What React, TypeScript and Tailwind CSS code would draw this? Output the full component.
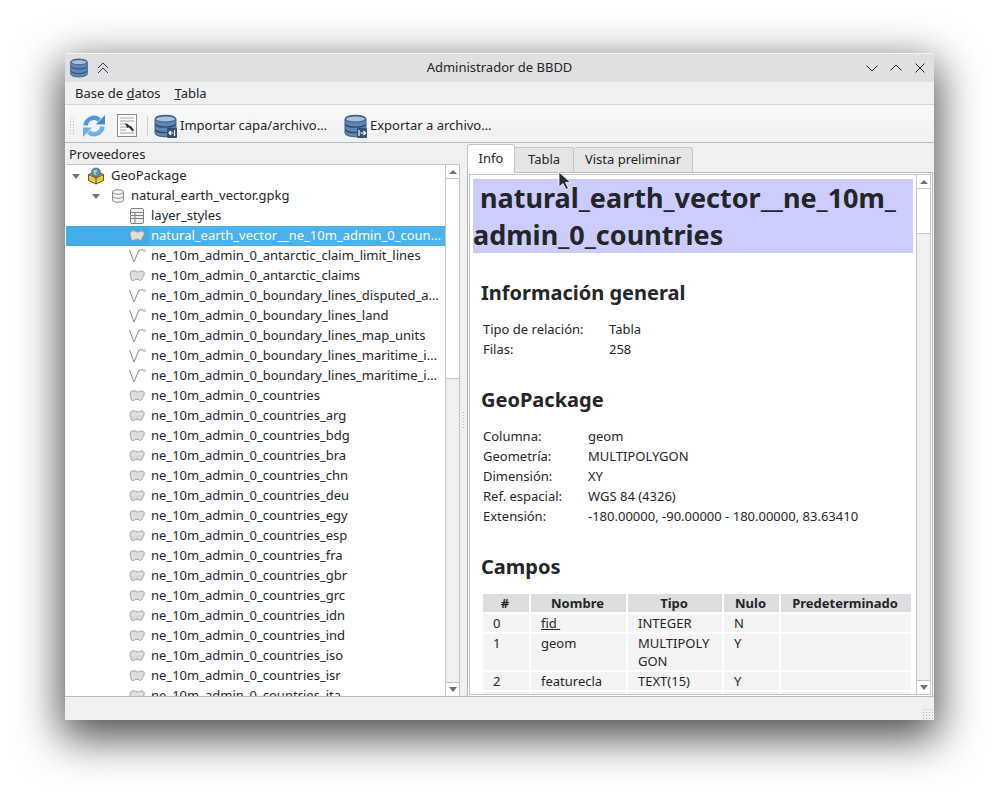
import React from "react";

const font = { fontFamily: '"Noto Sans", sans-serif' };

function DbIcon({ badge }: { badge?: "in" | "out" }) {
  return (
    <svg width="24" height="24" viewBox="0 0 24 24" className="shrink-0">
      <path d="M1 5c0-5 21-5 21 0v14c0 5-21 5-21 0z" fill="#5c86b4" stroke="#3a5a80" />
      <ellipse cx="11.500" cy="5" rx="10" ry="3" fill="#a9c1dc" stroke="#3a5a80" />
      <path d="M1.500 10.500c3 3.500 17 3.500 20 0M1.500 16c3 3.500 17 3.500 20 0" fill="none" stroke="#2f4a6b" strokeWidth="1.200" />
      {badge && <rect x="13" y="14" width="10" height="10" rx="1" fill="#33506f" />}
      {badge === "in" && <path d="M20.500 16v6M15 19h4m-2-2-2 2 2 2" stroke="#fff" fill="none" strokeWidth="1.200" />}
      {badge === "out" && <path d="M15 16v6M16.500 19h5m-2-2 2 2-2 2" stroke="#fff" fill="none" strokeWidth="1.200" />}
    </svg>
  );
}

function RefreshIcon() {
  return (
    <svg width="24" height="24" viewBox="0 0 24 24">
      <path d="M3.500 11.500a8.500 8.500 0 0 1 14-5.500" fill="none" stroke="#4b9ade" strokeWidth="4.500" />
      <path d="M14 10.500h9V1z" fill="#3f8fd6" />
      <path d="M20.500 12.500a8.500 8.500 0 0 1-14 5.500" fill="none" stroke="#6db0e6" strokeWidth="4.500" />
      <path d="M10 13.500H1V23z" fill="#6db0e6" />
    </svg>
  );
}

function ScriptIcon() {
  return (
    <svg width="20" height="23" viewBox="0 0 20 23">
      <rect x=".5" y=".5" width="19" height="22" fill="#fbfbfb" stroke="#8a8a8a" />
      <path d="M3 4h14M3 7h14M3 10h6M3 13h6M3 16h6M3 19h14" stroke="#a5a5a5" />
      <path d="M8 9.500l3 .5 1 1.500 2 .5 3 4-1.500 1.500-3.500-4-2 .5z" fill="#333" />
    </svg>
  );
}

function PolygonIcon() {
  return (
    <svg width="16" height="14" viewBox="0 0 16 14" className="shrink-0">
      <path
        d="M2 2.500c2-1.500 4-.5 6 .5 2 .5 3-1.500 5-1 2 .5 2.500 2 2 4-.5 1.500-1.500 2-2 3.500-.5 1.500-1 2.500-2.500 1.500-1.500-1-3.500-1-5 0-1.500 1-3.500.5-3.500-1.500 0-2-1-2.500-1-4 0-1 .5-2 1-2.500z"
        fill="#dededb"
        stroke="#9b9b98"
      />
    </svg>
  );
}

function LineIcon() {
  return (
    <svg width="17" height="14" viewBox="0 0 17 14" className="shrink-0 -mr-px">
      <path d="M.5 1l4.500 12 5-12c1 0 2 0 4-.5" fill="none" stroke="#888" />
      <circle cx="15.500" cy="1.500" r="1" fill="#fff" stroke="#888" strokeWidth=".6" />
    </svg>
  );
}

function TableIcon() {
  return (
    <svg width="14" height="16" viewBox="0 0 14 16" className="shrink-0">
      <rect x=".5" y=".5" width="13" height="15" rx="1.500" fill="#f0f0f0" stroke="#808080" />
      <path d="M1 4.500h12M1 7.500h12M1 10.500h12M5 4v11" stroke="#808080" />
    </svg>
  );
}

function Arrow() {
  return <span className="w-0 h-0 shrink-0 border-x-[4px] border-x-transparent border-t-[5px] border-t-[#6f7173]" />;
}

const rows: [string, "line" | "poly"][] = [
  ["ne_10m_admin_0_antarctic_claim_limit_lines", "line"],
  ["ne_10m_admin_0_antarctic_claims", "poly"],
  ["ne_10m_admin_0_boundary_lines_disputed_a…", "line"],
  ["ne_10m_admin_0_boundary_lines_land", "line"],
  ["ne_10m_admin_0_boundary_lines_map_units", "line"],
  ["ne_10m_admin_0_boundary_lines_maritime_i…", "line"],
  ["ne_10m_admin_0_boundary_lines_maritime_i…", "line"],
  ...["", "_arg", "_bdg", "_bra", "_chn", "_deu", "_egy", "_esp", "_fra", "_gbr", "_grc", "_idn", "_ind", "_iso", "_isr", "_ita"].map(
    (s): [string, "poly"] => ["ne_10m_admin_0_countries" + s, "poly"]
  ),
];

function TreeRow({ children, indent, selected }: { children: React.ReactNode; indent: string; selected?: boolean }) {
  return (
    <div className={`h-5 shrink-0 flex items-center gap-[6px] whitespace-nowrap ${indent} ${selected ? "bg-[#43ace8] text-[#fcfcfc]" : ""}`}>
      {children}
    </div>
  );
}

function Scrollbar({ thumbHeight }: { thumbHeight: string }) {
  return (
    <div className="w-[14px] shrink-0 border-l border-[#c4c4c4] flex flex-col bg-[#f0f0f0]">
      <div className="h-[14px] shrink-0 bg-white border-b border-[#c4c4c4] flex items-center justify-center">
        <span className="w-0 h-0 border-x-[4px] border-x-transparent border-b-[4px] border-b-[#6f7173]" />
      </div>
      <div className={`${thumbHeight} bg-white border-b border-[#c4c4c4]`} />
      <div className="flex-1" />
      <div className="h-[14px] shrink-0 bg-white border-t border-[#c4c4c4] flex items-center justify-center">
        <Arrow />
      </div>
    </div>
  );
}

function Section({ title, items, col }: { title: string; items: [string, string][]; col: string }) {
  return (
    <div>
      <h2 className="text-[20px] leading-[27px] font-bold text-[#232629] pl-2">{title}</h2>
      <div className="mt-[14px] pl-[10px]">
        {items.map(([k, v]) => (
          <div key={k} className="h-5 flex items-center">
            <span className={col}>{k}</span>
            <span>{v}</span>
          </div>
        ))}
      </div>
    </div>
  );
}

const cols = "grid grid-cols-[46px_95px_94px_55px_130px] gap-x-[2px]";

function FieldRow({ cells, tall }: { cells: React.ReactNode[]; tall?: boolean }) {
  return (
    <div className={`${cols} mt-[2px] ${tall ? "h-9" : "h-[18px]"}`}>
      {cells.map((c, i) => (
        <div key={i} className="bg-[#f4f4f4] pl-[10px] leading-[18px]">
          {c}
        </div>
      ))}
    </div>
  );
}

export default function App() {
  return (
    <div className="w-[999px] h-[797px] bg-white overflow-hidden pt-[53px] pl-[65px] text-[13px] text-[#232629]" style={font}>
      <div className="w-[869px] h-[667px] flex flex-col rounded-t-[3px] bg-[#eff0f1] shadow-[0_14px_44px_4px_rgba(0,0,0,0.7)] relative">
        {/* title bar */}
        <div className="h-[29px] shrink-0 bg-[#dee0e2] rounded-t-[3px] border-t border-[#f2f3f3] flex items-center pl-[4px] pr-[8px]">
          <svg width="20" height="20" viewBox="0 0 24 24" className="shrink-0">
            <path d="M2 5c0-5 20-5 20 0v14c0 5-20 5-20 0z" fill="#5c86b4" stroke="#3a5a80" />
            <ellipse cx="12" cy="5" rx="9.500" ry="3" fill="#a9c1dc" stroke="#3a5a80" />
            <path d="M2.500 10.500c3 3.500 16 3.500 19 0M2.500 16c3 3.500 16 3.500 19 0" fill="none" stroke="#2f4a6b" strokeWidth="1.200" />
          </svg>
          <svg width="12" height="12" viewBox="0 0 12 12" className="ml-[8px]">
            <path d="M1 6l5-5 5 5M1 11l5-5 5 5" fill="none" stroke="#3a3d40" />
          </svg>
          <div className="flex-1 text-center text-[13px] pl-[24px]">Administrador de BBDD</div>
          <div className="flex items-center gap-[12px]">
            <svg width="12" height="12" viewBox="0 0 12 12"><path d="M.5 3.500l5.500 5.500 5.500-5.500" fill="none" stroke="#232629" /></svg>
            <svg width="12" height="12" viewBox="0 0 12 12"><path d="M.5 8.500l5.500-5.500 5.500 5.500" fill="none" stroke="#232629" /></svg>
            <svg width="12" height="12" viewBox="0 0 12 12"><path d="M1.500 1.500l9 9M10.500 1.500l-9 9" fill="none" stroke="#232629" /></svg>
          </div>
        </div>
        {/* menu */}
        <div className="h-[23px] shrink-0 border-b border-[#d4d5d6] flex items-center pl-[10px] gap-[14px] pt-px">
          <span>Base de <span className="underline">d</span>atos</span>
          <span><span className="underline">T</span>abla</span>
        </div>
        {/* toolbar */}
        <div className="h-[38px] shrink-0 border-b border-[#b9babb] bg-gradient-to-b from-[#f9fafa] to-[#eff0f1] flex items-center pl-[4px] pt-[4px]">
          <div className="w-[6px] h-[18px] bg-[radial-gradient(#b5b6b7_1px,transparent_1px)] bg-[length:3px_3px]" />
          <div className="ml-[7px] h-6"><RefreshIcon /></div>
          <div className="ml-[11px] h-[23px]"><ScriptIcon /></div>
          <div className="ml-[10px] w-px h-5 bg-[#cfd0d1]" />
          <div className="ml-[6px] flex items-center gap-[2px]"><DbIcon badge="in" /><span>Importar capa/archivo…</span></div>
          <div className="ml-[17px] flex items-center gap-[2px]"><DbIcon badge="out" /><span>Exportar a archivo…</span></div>
        </div>
        {/* panes */}
        <div className="flex-1 min-h-0 flex border-b border-[#b9babb]">
          <div className="w-[395px] shrink-0 flex flex-col">
            <div className="h-[21px] shrink-0 pl-[4px] leading-[23px]">Proveedores</div>
            <div className="flex-1 min-h-0 flex bg-white border-t border-r border-[#c4c4c4] ml-px">
              <div className="flex-1 min-w-0 overflow-hidden flex flex-col pt-px">
                <TreeRow indent="pl-[6px]">
                  <Arrow />
                  <svg width="18" height="18" viewBox="0 0 18 18" className="ml-px shrink-0">
                    <path d="M9 4.500l7.500 3v6L9 17 1.500 13.500v-6z" fill="#ecc93f" stroke="#5f5424" />
                    <path d="M1.500 7.500L9 11l7.500-3.500M9 11v6" fill="none" stroke="#5f5424" />
                    <circle cx="9" cy="5.500" r="4.500" fill="#5a8db5" stroke="#41627c" strokeWidth=".7" />
                    <path d="M6.500 3.500l3-1 1 2-2 1 1 2-2 .5z" fill="#bcd0a8" />
                  </svg>
                  <span>GeoPackage</span>
                </TreeRow>
                <TreeRow indent="pl-[26px]">
                  <Arrow />
                  <svg width="14" height="14" viewBox="0 0 14 14" className="ml-[5px] shrink-0">
                    <path d="M1.500 3c0-3 11-3 11 0v8c0 3-11 3-11 0z" fill="#f4f4f4" stroke="#8a8a8a" />
                    <path d="M1.500 3c0 3 11 3 11 0M1.500 7c0 3 11 3 11 0" fill="none" stroke="#8a8a8a" />
                  </svg>
                  <span>natural_earth_vector.gpkg</span>
                </TreeRow>
                <TreeRow indent="pl-[64px]"><TableIcon /><span className="ml-px">layer_styles</span></TreeRow>
                <TreeRow indent="pl-[63px]" selected>
                  <PolygonIcon />
                  <span className="-ml-[2px] pl-[2px] flex-1 min-w-0 h-full flex items-center bg-[#4bb2ec]">natural_earth_vector__ne_10m_admin_0_coun…</span>
                </TreeRow>
                {rows.map(([name, kind], i) => (
                  <TreeRow key={i} indent="pl-[63px]">
                    {kind === "line" ? <LineIcon /> : <PolygonIcon />}
                    <span>{name}</span>
                  </TreeRow>
                ))}
              </div>
              <Scrollbar thumbHeight="h-[200px]" />
            </div>
          </div>
          {/* splitter */}
          <div className="w-[7px] shrink-0 flex items-center justify-center">
            <div className="w-[3px] h-[18px] bg-[radial-gradient(#b5b6b7_1px,transparent_1px)] bg-[length:3px_3px]" />
          </div>
          <div className="flex-1 min-w-0 flex flex-col pt-px pr-px">
            <div className="h-[28px] shrink-0 flex items-end relative z-10">
              <div className="h-[29px] -mb-px w-[48px] bg-white border border-b-0 border-[#c4c4c4] rounded-t-[3px] flex items-center justify-center">Info</div>
              <div className="h-[25px] w-[59px] bg-[#e4e5e6] border-t border-r border-[#c4c4c4] rounded-tr-[3px] flex items-center justify-center">Tabla</div>
              <div className="h-[25px] w-[119px] bg-[#e4e5e6] border-t border-r border-[#c4c4c4] rounded-t-[3px] flex items-center justify-center">Vista preliminar</div>
            </div>
            <div className="flex-1 min-h-0 border border-b-0 border-[#b9babb] bg-white p-px">
              <div className="h-full border border-[#c4c4c4] flex">
                <div className="flex-1 min-w-0 overflow-hidden pt-[4px] pl-[3px] pr-[3px]">
                  <h1 className="bg-[#ccccff] text-[27px] leading-[37px] font-bold text-[#232629]">
                    <div className="pl-[7px]">natural_earth_vector__ne_10m_</div>
                    <div>admin_0_countries</div>
                  </h1>
                  <div className="mt-[26px]">
                    <Section col="w-[126px]" title="Información general" items={[["Tipo de relación:", "Tabla"], ["Filas:", "258"]]} />
                  </div>
                  <div className="mt-[26px]">
                    <Section col="w-[105px]" title="GeoPackage" items={[
                      ["Columna:", "geom"],
                      ["Geometría:", "MULTIPOLYGON"],
                      ["Dimensión:", "XY"],
                      ["Ref. espacial:", "WGS 84 (4326)"],
                      ["Extensión:", "-180.00000, -90.00000 - 180.00000, 83.63410"],
                    ]} />
                  </div>
                  <h2 className="mt-[26px] text-[20px] leading-[27px] font-bold pl-2">Campos</h2>
                  <div className="mt-[14px] pl-[10px]">
                    <div className={`${cols} h-[18px]`}>
                      {["#", "Nombre", "Tipo", "Nulo", "Predeterminado"].map((h) => (
                        <div key={h} className="bg-[#dedede] text-center font-bold leading-[18px] pr-[2px]">{h}</div>
                      ))}
                    </div>
                    <FieldRow cells={["0", <span className="underline">fid&nbsp;</span>, "INTEGER", "N", ""]} />
                    <FieldRow tall cells={["1", "geom", <>MULTIPOLY<br />GON</>, "Y", ""]} />
                    <FieldRow cells={["2", "featurecla", "TEXT(15)", "Y", ""]} />
                    <FieldRow cells={["", "", "", "", ""]} />
                  </div>
                </div>
                <Scrollbar thumbHeight="h-[45px]" />
              </div>
            </div>
          </div>
        </div>
        {/* status bar */}
        <div className="h-[23px] shrink-0 flex items-end justify-end pr-px pb-px">
          <div className="w-[11px] h-[11px] bg-[radial-gradient(#b5b6b7_1px,transparent_1px)] bg-[length:3px_3px]" />
        </div>
        {/* mouse cursor */}
        <svg width="14" height="20" viewBox="0 0 14 20" className="absolute left-[493px] top-[118px] z-20">
          <path d="M1 1v15l4-3.500 3 6 2.500-1.200-3-5.800h5z" fill="#2b2b2b" stroke="#fff" strokeWidth=".8" />
        </svg>
      </div>
    </div>
  );
}
